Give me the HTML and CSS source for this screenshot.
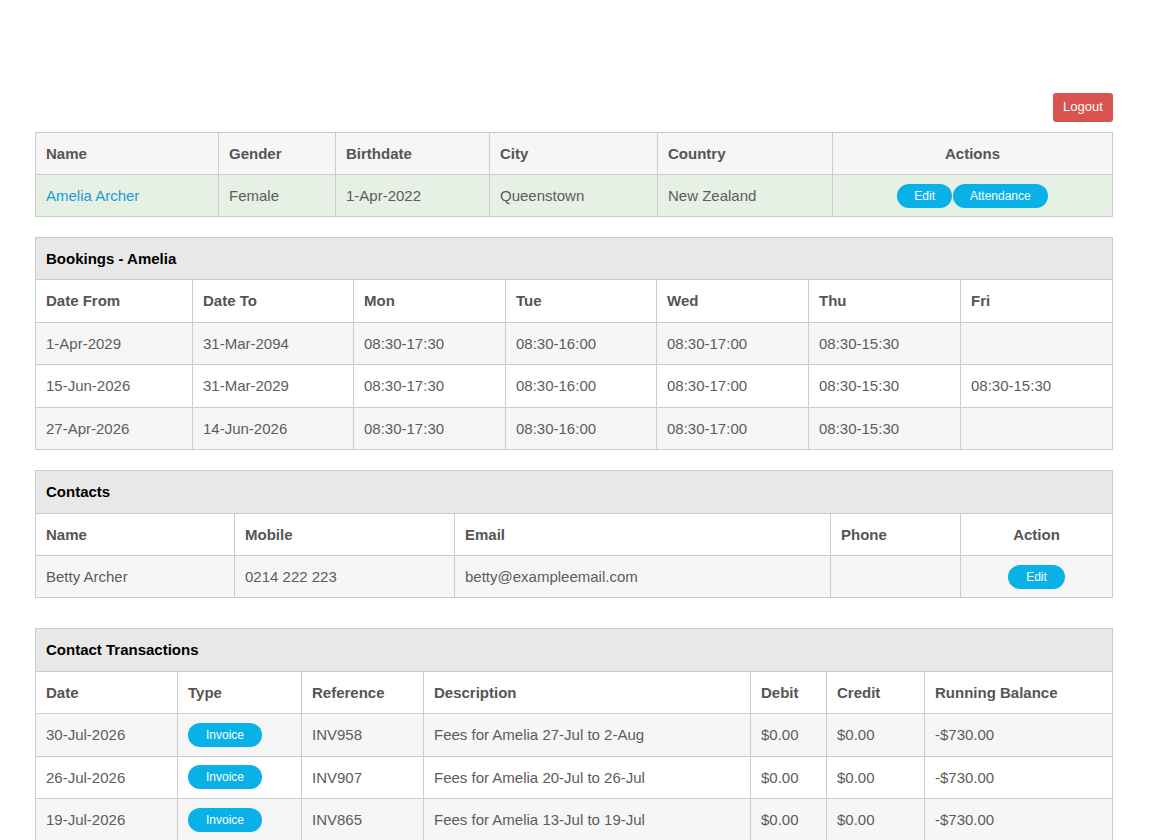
FILE: index.html
```html
<!DOCTYPE html>
<html lang="en">
<head>
	<meta charset="UTF-8">
	<title>Child - Amelia Archer</title>
	<link rel="stylesheet" href="styles.css">
</head>
<body>
	<div class="page">
		<div class="topbar">
			<a class="btn-logout" href="#">Logout</a>
		</div>

		<!--child details-->
		<table class="grid child">
			<colgroup>
				<col class="c183"><col class="c117"><col class="c154"><col class="c168"><col class="c175"><col>
			</colgroup>
			<thead>
				<tr>
					<th>Name</th>
					<th>Gender</th>
					<th>Birthdate</th>
					<th>City</th>
					<th>Country</th>
					<th class="center">Actions</th>
				</tr>
			</thead>
			<tbody>
				<tr>
					<td><a class="link" href="#">Amelia Archer</a></td>
					<td>Female</td>
					<td>1-Apr-2022</td>
					<td>Queenstown</td>
					<td>New Zealand</td>
					<td class="center btn-cell"><span class="pills"><a class="pill" href="#">Edit</a><a class="pill" href="#">Attendance</a></span></td>
				</tr>
			</tbody>
		</table>

		<!--bookings-->
		<table class="grid panel">
			<colgroup>
				<col class="c157"><col class="c161"><col class="c152"><col class="c151"><col class="c152"><col class="c152"><col>
			</colgroup>
			<thead>
				<tr><th class="title" colspan="7">Bookings - Amelia</th></tr>
				<tr>
					<th>Date From</th>
					<th>Date To</th>
					<th>Mon</th>
					<th>Tue</th>
					<th>Wed</th>
					<th>Thu</th>
					<th>Fri</th>
				</tr>
			</thead>
			<tbody>
				<tr>
					<td>1-Apr-2029</td><td>31-Mar-2094</td><td>08:30-17:30</td><td>08:30-16:00</td><td>08:30-17:00</td><td>08:30-15:30</td><td></td>
				</tr>
				<tr>
					<td>15-Jun-2026</td><td>31-Mar-2029</td><td>08:30-17:30</td><td>08:30-16:00</td><td>08:30-17:00</td><td>08:30-15:30</td><td>08:30-15:30</td>
				</tr>
				<tr>
					<td>27-Apr-2026</td><td>14-Jun-2026</td><td>08:30-17:30</td><td>08:30-16:00</td><td>08:30-17:00</td><td>08:30-15:30</td><td></td>
				</tr>
			</tbody>
		</table>

		<!--contacts-->
		<table class="grid panel">
			<colgroup>
				<col class="c199"><col class="c220"><col class="c376"><col class="c130"><col>
			</colgroup>
			<thead>
				<tr><th class="title" colspan="5">Contacts</th></tr>
				<tr>
					<th>Name</th>
					<th>Mobile</th>
					<th>Email</th>
					<th>Phone</th>
					<th class="center">Action</th>
				</tr>
			</thead>
			<tbody>
				<tr>
					<td>Betty Archer</td>
					<td>0214 222 223</td>
					<td>betty@exampleemail.com</td>
					<td></td>
					<td class="center btn-cell"><a class="pill pill-wide" href="#">Edit</a></td>
				</tr>
			</tbody>
		</table>

		<!--transactions-->
		<table class="grid panel trans">
			<colgroup>
				<col class="c142"><col class="c124"><col class="c122"><col class="c327"><col class="c76"><col class="c98"><col>
			</colgroup>
			<thead>
				<tr><th class="title" colspan="7">Contact Transactions</th></tr>
				<tr>
					<th>Date</th>
					<th>Type</th>
					<th>Reference</th>
					<th>Description</th>
					<th>Debit</th>
					<th>Credit</th>
					<th>Running Balance</th>
				</tr>
			</thead>
			<tbody>
				<tr>
					<td>30-Jul-2026</td><td class="btn-cell"><span class="pill pill-inv">Invoice</span></td><td>INV958</td><td>Fees for Amelia 27-Jul to 2-Aug</td><td>$0.00</td><td>$0.00</td><td>-$730.00</td>
				</tr>
				<tr>
					<td>26-Jul-2026</td><td class="btn-cell"><span class="pill pill-inv">Invoice</span></td><td>INV907</td><td>Fees for Amelia 20-Jul to 26-Jul</td><td>$0.00</td><td>$0.00</td><td>-$730.00</td>
				</tr>
				<tr>
					<td>19-Jul-2026</td><td class="btn-cell"><span class="pill pill-inv">Invoice</span></td><td>INV865</td><td>Fees for Amelia 13-Jul to 19-Jul</td><td>$0.00</td><td>$0.00</td><td>-$730.00</td>
				</tr>
			</tbody>
		</table>
	</div>
</body>
</html>
```

FILE: styles.css
```css
body{
	margin:0;
	font-family:"Liberation Sans", Arial, sans-serif;
	font-size:15px;
	color:#555;
	background:#fff;
}
.page{
	width:1078px;
	padding:93px 0 40px 35px;
}
.topbar{
	display:flex;
	justify-content:flex-end;
	margin-bottom:10px;
}
.btn-logout{
	display:block;
	width:60px;
	height:29px;
	line-height:28px;
	text-align:center;
	font-size:13px;
	color:#fff;
	text-decoration:none;
	background:#d9534f;
	border-radius:3px;
}

/*tables*/
.grid{
	width:100%;
	border-collapse:collapse;
	table-layout:fixed;
	margin-bottom:20px;
}
.grid th,
.grid td{
	border:1px solid #ccc;
	padding:10px 10px;
	line-height:1.42857;
	text-align:left;
	white-space:nowrap;
}
.child th,
.child td{
	line-height:21px;
}
.grid th{
	font-weight:bold;
	color:#555;
}
.grid td{
	color:#5c5c5c;
}
.grid .center{
	text-align:center;
}
.grid .btn-cell{
	padding-top:8px;
	padding-bottom:8px;
}
.child thead tr{
	background:#f6f6f6;
}
.child tbody tr{
	background:#e6f0e5;
}
.panel tbody tr:nth-child(odd){
	background:#f6f6f6;
}
.panel .title{
	background:#e8e8e8;
	color:#000;
}
.trans{
	margin-top:30px;
}
.link{
	color:#1a9fd4;
	text-decoration:none;
}

/*pills*/
.pills{
	display:inline-flex;
	gap:1px;
	vertical-align:middle;
}
.pill{
	display:inline-block;
	vertical-align:middle;
	height:24px;
	line-height:24px;
	padding:0 17px;
	font-size:12px;
	color:#fff;
	text-decoration:none;
	background:#09b1e6;
	border-radius:12px;
}
.pill-wide{
	padding:0 18px;
}
.pill-inv{
	padding:0 18px;
}

/*column widths*/
.c76{width:76px;}
.c98{width:98px;}
.c117{width:117px;}
.c122{width:122px;}
.c124{width:124px;}
.c130{width:130px;}
.c142{width:142px;}
.c151{width:151px;}
.c152{width:152px;}
.c154{width:154px;}
.c157{width:157px;}
.c161{width:161px;}
.c168{width:168px;}
.c175{width:175px;}
.c183{width:183px;}
.c199{width:199px;}
.c220{width:220px;}
.c327{width:327px;}
.c376{width:376px;}
```
